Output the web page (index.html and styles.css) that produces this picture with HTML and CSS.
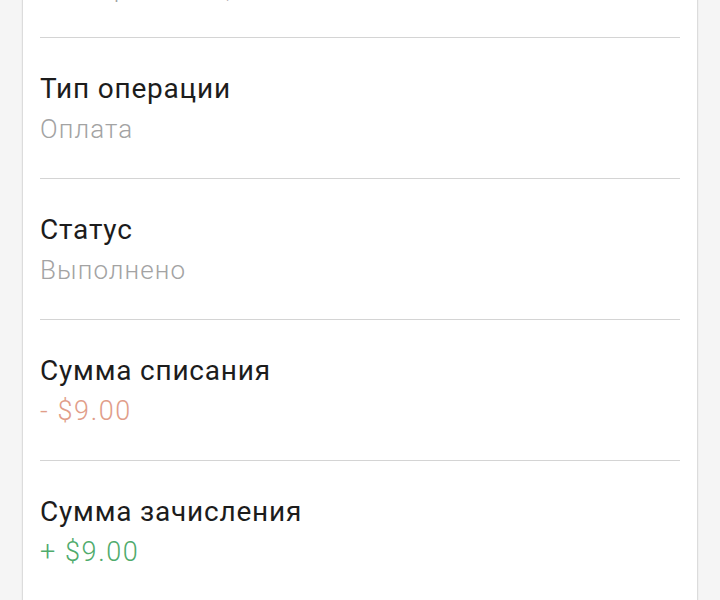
FILE: index.html
```html
<!DOCTYPE html>
<html lang="ru">
<head>
  <meta charset="UTF-8">
  <meta name="viewport" content="width=device-width, initial-scale=1.0">
  <title>Детали операции</title>
  <link rel="stylesheet" href="styles.css">
</head>
<body>
  <div class="card">
    <div class="row">
      <div class="label">Дата операции</div>
      <div class="value">21 марта 2021, 14:35</div>
    </div>
    <div class="row">
      <div class="label">Тип операции</div>
      <div class="value">Оплата</div>
    </div>
    <div class="row">
      <div class="label">Статус</div>
      <div class="value">Выполнено</div>
    </div>
    <div class="row">
      <div class="label">Сумма списания</div>
      <div class="value debit">- $9.00</div>
    </div>
    <div class="row">
      <div class="label">Сумма зачисления</div>
      <div class="value credit">+ $9.00</div>
    </div>
  </div>
</body>
</html>
```

FILE: styles.css
```css
html {
  background: #f5f5f5;
}
body {
  margin: 0;
  font-family: Roboto, 'Noto Sans', sans-serif;
  color: #1c1c1c;
}
.card {
  background: #fff;
  margin: -103px 23px 0;
  padding: 0 17px;
  box-shadow: 0 0 1px 1px #dcdcdc;
  min-height: 800px;
}
.row {
  padding: 33px 0 29px;
  border-bottom: 1px solid #d4d4d4;
}
.label {
  font-size: 28px;
  line-height: 36px;
  letter-spacing: 0.8px;
}
.value {
  font-size: 26px;
  font-weight: 300;
  line-height: 40px;
  margin-top: 2px;
  letter-spacing: 1.1px;
  color: #a3a3a3;
}
.debit,
.credit {
  font-size: 27px;
  letter-spacing: 1.6px;
}
.debit {
  color: #e19d89;
}
.credit {
  color: #4fab6c;
}
```
